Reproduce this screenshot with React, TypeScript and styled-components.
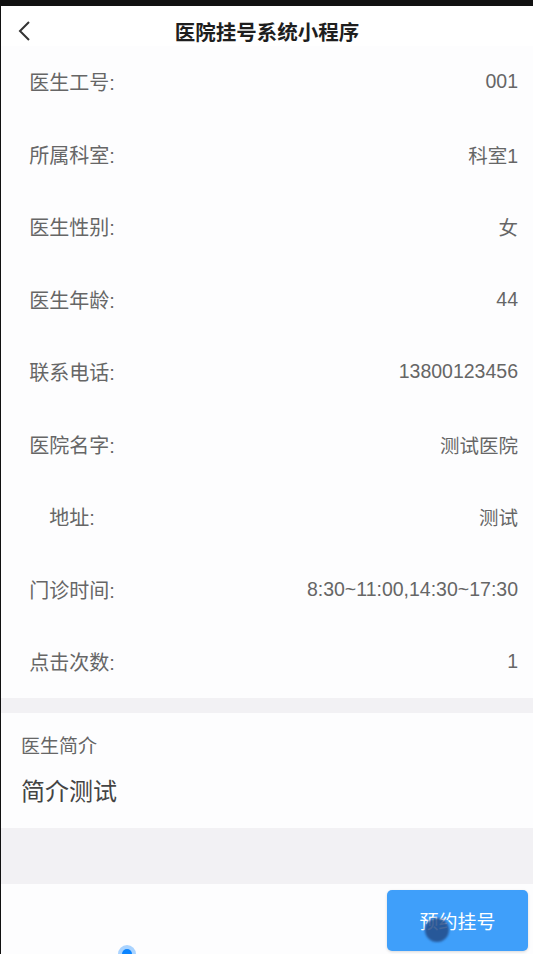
import React from 'react';
import styled, { createGlobalStyle } from 'styled-components';

const GlobalStyle = createGlobalStyle`
  html, body {
    margin: 0;
    padding: 0;
    background: #111;
  }
  * {
    box-sizing: border-box;
  }
`;

const doctor = [
  { label: '医生工号:', value: '001' },
  { label: '所属科室:', value: '科室1' },
  { label: '医生性别:', value: '女' },
  { label: '医生年龄:', value: '44' },
  { label: '联系电话:', value: '13800123456' },
  { label: '医院名字:', value: '测试医院' },
  { label: '地址:', value: '测试' },
  { label: '门诊时间:', value: '8:30~11:00,14:30~17:30' },
  { label: '点击次数:', value: '1' },
];

const Frame = styled.div`
  width: 533px;
  height: 954px;
  padding: 6px 0 0 1px;
  background: #111;
  overflow: hidden;
`;

const Screen = styled.div`
  position: relative;
  height: 948px;
  display: flex;
  flex-direction: column;
  background: #fdfdfe;
  font-family: 'Liberation Sans', 'Noto Sans CJK SC', sans-serif;
`;

const Header = styled.div`
  position: relative;
  height: 39.5px;
  padding-top: 14px;
  display: flex;
  justify-content: center;
  background: #fff;
`;

const Title = styled.h1`
  margin: 0;
  font-size: 20.5px;
  line-height: 25px;
  font-weight: 700;
  color: #1e1e1e;
`;

const Back = styled.svg`
  position: absolute;
  left: 16px;
  top: 13px;
`;

const InfoList = styled.div`
  display: flex;
  flex-direction: column;
`;

const Row = styled.div`
  height: 72.5px;
  display: flex;
  align-items: center;
  justify-content: space-between;
  padding: 0 15px 0 21px;
  color: #666;
`;

const Label = styled.span`
  width: 100px;
  font-size: 20px;
  text-align: center;
`;

const Value = styled.span`
  font-size: 19.5px;
  text-align: right;
`;

const Gap = styled.div<{ h: number }>`
  height: ${(p) => p.h}px;
  background: #f2f1f4;
`;

const Intro = styled.div`
  height: 115px;
  padding: 22px 20px 0;
  background: #fdfdfe;
`;

const IntroTitle = styled.div`
  font-size: 19px;
  line-height: 24px;
  color: #666;
`;

const IntroText = styled.div`
  margin-top: 18px;
  font-size: 24px;
  line-height: 30px;
  color: #444;
`;

const BottomBar = styled.div`
  flex: 1;
  display: flex;
  justify-content: flex-end;
  padding: 6px 5px 0 0;
  background: #fdfdfe;
`;

const BookButton = styled.button`
  width: 141px;
  height: 61px;
  border: none;
  border-radius: 5px;
  background: #3f9ffa;
  color: #fff;
  font-family: inherit;
  font-size: 19px;
  box-shadow: 0 1px 3px rgba(0, 0, 0, 0.15);
`;

const TouchDot = styled.div<{ x: number; y: number; r: number; color: string }>`
  position: absolute;
  left: ${(p) => p.x - p.r}px;
  top: ${(p) => p.y - p.r}px;
  width: ${(p) => p.r * 2}px;
  height: ${(p) => p.r * 2}px;
  border-radius: 50%;
  background: ${(p) => p.color};
`;

const Ring = styled(TouchDot)`
  background: #0a84ff;
  box-shadow: 0 0 0 4px #a9d3ff;
`;

const Press = styled(TouchDot)`
  filter: blur(1px);
`;

function App() {
  return (
    <Frame>
      <GlobalStyle />
      <Screen>
        <Header>
          <Back width="16" height="24" viewBox="0 0 16 24">
            <path d="M12 3 L3 12 L12 21" fill="none" stroke="#333" strokeWidth="2" />
          </Back>
          <Title>医院挂号系统小程序</Title>
        </Header>
        <InfoList>
          {doctor.map((e) => (
            <Row key={e.label}>
              <Label>{e.label}</Label>
              <Value>{e.value}</Value>
            </Row>
          ))}
        </InfoList>
        <Gap h={15} />
        <Intro>
          <IntroTitle>医生简介</IntroTitle>
          <IntroText>简介测试</IntroText>
        </Intro>
        <Gap h={56} />
        <BottomBar>
          <BookButton>预约挂号</BookButton>
        </BottomBar>
        <Press x={436} y={924} r={12} color="rgba(35, 75, 135, 0.85)" />
        <Ring x={126} y={948} r={5} color="#0a84ff" />
      </Screen>
    </Frame>
  );
}

export default App;
